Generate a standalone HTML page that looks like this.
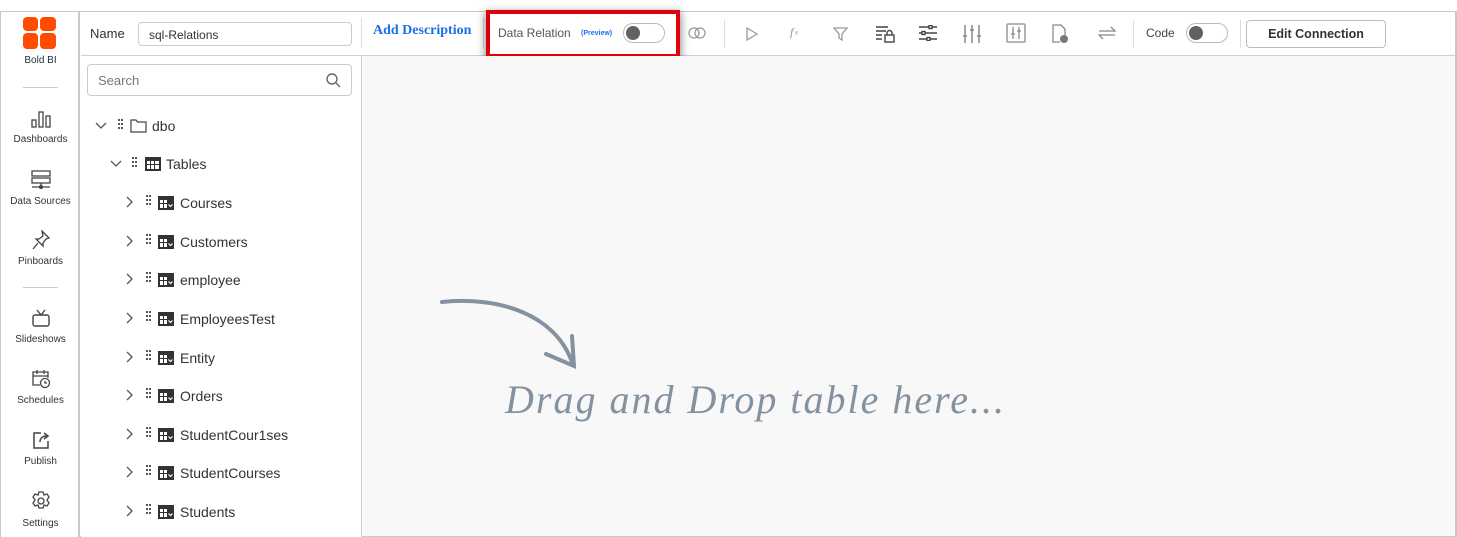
<!DOCTYPE html>
<html><head><meta charset="utf-8"><style>
*{box-sizing:border-box;margin:0;padding:0}
body{width:1457px;height:537px;background:#fff;font-family:"Liberation Sans",sans-serif;position:relative;overflow:hidden;color:#333}
.a{position:absolute}
.frame{left:0;top:11px;width:1457px;height:526px;border:1px solid #c8c8c8;border-right:2px solid #c8c8c8}
.side{left:1px;top:12px;width:79px;height:525px;border-right:2px solid #c8c8c8;background:#fff}
.nav{position:absolute;left:0;width:79px;text-align:center;font-size:10px;color:#333}
.nav svg{display:block;margin:0 auto 6px}
.top{left:81px;top:12px;width:1374px;height:44px;border-bottom:1px solid #d0d0d0;background:#fff}
.tree{left:81px;top:56px;width:281px;height:481px;border-right:1px solid #d0d0d0;background:#fff}
.canvas{left:363px;top:56px;width:1092px;height:480px;background:#f8f8f8}
.row{position:absolute;font-size:14px;color:#333;display:flex;align-items:center;height:20px}
.tg{position:absolute;background:#eee;border:1px solid #bbb;border-radius:10px;width:42px;height:20px}
.tg i{position:absolute;left:2px;top:2px;width:14px;height:14px;border-radius:50%;background:#616161}
.ic{position:absolute;top:24px}
</style></head><body>
<div class="a frame"></div>
<div class="a side">
 <svg class="a" style="left:22px;top:5px" width="33" height="32" viewBox="0 0 33 32"><rect x="0" y="0" width="15" height="14" rx="4" fill="#ff4c00"/><rect x="17" y="0" width="16" height="14" rx="4" fill="#ff4c00"/><rect x="0" y="16" width="15" height="16" rx="4" fill="#ff4c00"/><rect x="17" y="16" width="16" height="16" rx="4" fill="#ff4c00"/></svg>
 <div class="nav" style="top:43px;font-size:10px;color:#1f2d3d">Bold BI</div>
 <div class="a" style="left:22px;top:75px;width:35px;border-top:1px solid #ccc"></div>
 <div class="nav" style="top:98px"><svg width="20" height="18" viewBox="0 0 20 18" fill="none" stroke="#444" stroke-width="1.3"><rect x="1" y="10" width="4" height="7"/><rect x="8" y="2" width="4" height="15"/><rect x="15" y="6" width="4" height="11"/></svg>Dashboards</div>
 <div class="nav" style="top:158px"><svg width="22" height="20" viewBox="0 0 22 20" fill="none" stroke="#444" stroke-width="1.3"><rect x="2" y="1" width="18" height="5"/><rect x="2" y="8" width="18" height="5"/><path d="M11 13v4M2 17h18"/><circle cx="11" cy="17" r="1.5" fill="#444"/></svg>Data Sources</div>
 <div class="nav" style="top:218px"><svg width="20" height="20" viewBox="0 0 20 20" fill="none" stroke="#444" stroke-width="1.3"><path d="M11 1l7 7-3 1-3 4 0 3-7-7 3 0 4-3z M7 13l-5 6"/></svg>Pinboards</div>
 <div class="a" style="left:22px;top:275px;width:35px;border-top:1px solid #ccc"></div>
 <div class="nav" style="top:296px"><svg width="20" height="20" viewBox="0 0 20 20" fill="none" stroke="#444" stroke-width="1.4"><rect x="2" y="7" width="16" height="11" rx="2"/><path d="M6 2l4 5 4-5"/></svg>Slideshows</div>
 <div class="nav" style="top:356px"><svg width="20" height="21" viewBox="0 0 20 21" fill="none" stroke="#444" stroke-width="1.3"><path d="M9 17H2V4h15v6M2 8h15M6 2v4M13 2v4"/><circle cx="14" cy="15" r="4.5"/><path d="M14 13v2h2"/></svg>Schedules</div>
 <div class="nav" style="top:418px"><svg width="20" height="20" viewBox="0 0 20 20" fill="none" stroke="#444" stroke-width="1.5"><path d="M10 3H3v15h14v-7"/><path d="M9 12c0-4 3-6 7-6M13 3l4 3-4 3"/></svg>Publish</div>
 <div class="nav" style="top:478px"><svg width="22" height="22" viewBox="0 0 22 22" fill="none" stroke="#444" stroke-width="1.3"><path d="M9 2h4l1 3 3-1 2 3-2 3 2 3-2 3-3-1-1 3H9l-1-3-3 1-2-3 2-3-2-3 2-3 3 1z"/><circle cx="11" cy="11" r="3"/></svg>Settings</div>
</div>
<div class="a top">
 <div class="a" style="left:9px;top:14px;font-size:13px">Name</div>
 <div class="a" style="left:57px;top:10px;width:214px;height:24px;border:1px solid #ccc;border-radius:4px;font-size:12px;padding:5px 10px">sql-Relations</div>
 <div class="a" style="left:280px;top:6px;height:30px;border-left:1px solid #ddd"></div>
 <div class="a" style="left:292px;top:11px;font-family:'Liberation Serif',serif;font-weight:bold;font-size:14px;color:#1a6fe8">Add Description</div>
 <div class="a" style="left:402px;top:6px;height:30px;border-left:1px solid #ddd"></div>
 <div class="a" style="left:417px;top:14px;font-size:12px;color:#555">Data Relation</div>
 <div class="a" style="left:500px;top:18px;font-size:7px;font-weight:bold;color:#1a6fe8">(Preview)</div>
 <div class="tg" style="left:542px;top:11px;background:#fff"><i></i></div>
 <svg class="ic" style="left:607px;top:15px" width="18" height="12" viewBox="0 0 18 12" fill="none" stroke="#999" stroke-width="1.3"><circle cx="6" cy="6" r="5"/><circle cx="12" cy="6" r="5"/></svg>
 <div class="a" style="left:643px;top:8px;height:28px;border-left:1px solid #ddd"></div>
 <svg class="ic" style="left:665px;top:15px" width="12" height="14" viewBox="0 0 12 14" fill="none" stroke="#999" stroke-width="1.3"><path d="M1 1l10 6-10 6z"/></svg>
 <div class="a" style="left:709px;top:13px;font-size:12px;color:#999;font-family:'Liberation Serif',serif;font-style:italic">f<span style="font-size:9px">×</span></div>
 <svg class="ic" style="left:752px;top:15px" width="15" height="14" viewBox="0 0 15 14" fill="none" stroke="#999" stroke-width="1.3"><path d="M1 1h13L9 7v6L6 11V7z"/></svg>
 <svg class="ic" style="left:794px;top:13px" width="20" height="18" viewBox="0 0 20 18" fill="none" stroke="#444" stroke-width="1.4"><path d="M1 2h12M1 6h10M1 10h6M1 14h6"/><rect x="10" y="10" width="9" height="7"/><path d="M12 10V8a2.5 2.5 0 015 0v2"/></svg>
 <svg class="ic" style="left:837px;top:13px" width="20" height="16" viewBox="0 0 20 16" fill="none" stroke="#444" stroke-width="1.4"><path d="M1 2h18M1 8h18M1 14h18"/><rect x="11" y="0.5" width="3" height="3" fill="#fff"/><rect x="4" y="6.5" width="3" height="3" fill="#fff"/><rect x="9" y="12.5" width="3" height="3" fill="#fff"/></svg>
 <svg class="ic" style="left:881px;top:12px" width="20" height="20" viewBox="0 0 20 20" fill="none" stroke="#777" stroke-width="1.3"><path d="M3 1v18M10 1v18M17 1v18M1 12h4M8 6h4M15 12h4"/></svg>
 <svg class="ic" style="left:925px;top:11px" width="20" height="20" viewBox="0 0 20 20" fill="none" stroke="#888" stroke-width="1.3"><rect x="1" y="1" width="18" height="18" rx="1"/><path d="M7 4v12M13 4v12M5 11h4M11 8h4"/></svg>
 <svg class="ic" style="left:970px;top:12px" width="18" height="20" viewBox="0 0 18 20" fill="none" stroke="#888" stroke-width="1.3"><path d="M9 18H2V1h8l4 4v6"/><circle cx="13" cy="15" r="4" fill="#777" stroke="none"/></svg>
 <svg class="ic" style="left:1017px;top:14px" width="18" height="14" viewBox="0 0 18 14" fill="none" stroke="#888" stroke-width="1.3"><path d="M1 5h16L13 1M17 9H1l4 4"/></svg>
 <div class="a" style="left:1052px;top:8px;height:28px;border-left:1px solid #ddd"></div>
 <div class="a" style="left:1065px;top:14px;font-size:12px;color:#444">Code</div>
 <div class="tg" style="left:1105px;top:11px;background:#fff"><i style="left:2px"></i></div>
 <div class="a" style="left:1159px;top:8px;height:28px;border-left:1px solid #ddd"></div>
 <div class="a" style="left:1165px;top:8px;width:140px;height:28px;border:1px solid #bbb;border-radius:4px;font-size:12.5px;font-weight:bold;color:#333;text-align:center;line-height:26px">Edit Connection</div>
</div>
<div class="a" style="left:486px;top:10px;width:194px;height:48px;border:4px solid #e0000b;box-shadow:0 3px 8px 1px rgba(0,0,0,.45)"></div>
<div class="a tree">
 <div class="a" style="left:6px;top:8px;width:265px;height:32px;border:1px solid #ccc;border-radius:4px;font-size:13px;color:#777;padding:8px 10px">Search</div>
 <svg class="a" style="left:245px;top:17px" width="15" height="15" viewBox="0 0 15 15" fill="none" stroke="#666" stroke-width="1.4"><circle cx="6" cy="6" r="5"/><path d="M10 10l4 4"/></svg>
</div>
<svg class="a" style="left:0;top:0" width="362" height="537">
 <defs>
  <g id="dots" fill="#555"><rect x="0" y="0" width="2" height="2"/><rect x="3" y="0" width="2" height="2"/><rect x="0" y="4" width="2" height="2"/><rect x="3" y="4" width="2" height="2"/><rect x="0" y="8" width="2" height="2"/><rect x="3" y="8" width="2" height="2"/></g>
  <g id="tb"><rect x="0" y="0" width="16" height="14" fill="#333"/><rect x="2" y="4" width="3" height="3" fill="#fff"/><rect x="6" y="4" width="3" height="3" fill="#fff"/><rect x="2" y="8" width="3" height="4" fill="#fff"/><rect x="6" y="8" width="3" height="4" fill="#fff"/><path d="M10.5 8.5l2 2 2-2" stroke="#fff" stroke-width="1.2" fill="none"/></g>
 </defs>
 <path d="M96 123l5 5 5-5" stroke="#555" stroke-width="1.3" fill="none"/>
 <use href="#dots" x="118" y="119"/>
 <path d="M131 120h5l1.5 2H146v10h-15z" fill="none" stroke="#444" stroke-width="1.2"/>
 <path d="M111 161l5 5 5-5" stroke="#555" stroke-width="1.3" fill="none"/>
 <use href="#dots" x="132" y="157"/>
 <g><rect x="145" y="157" width="16" height="14" fill="#333"/><rect x="147" y="161" width="3" height="3" fill="#fff"/><rect x="151" y="161" width="3" height="3" fill="#fff"/><rect x="155" y="161" width="4" height="3" fill="#fff"/><rect x="147" y="165" width="3" height="4" fill="#fff"/><rect x="151" y="165" width="3" height="4" fill="#fff"/><rect x="155" y="165" width="4" height="4" fill="#fff"/></g>
 <g stroke="#555" stroke-width="1.3" fill="none">
  <path d="M127 197l5 5-5 5"/><path d="M127 236l5 5-5 5"/><path d="M127 274l5 5-5 5"/><path d="M127 313l5 5-5 5"/><path d="M127 352l5 5-5 5"/><path d="M127 390l5 5-5 5"/><path d="M127 429l5 5-5 5"/><path d="M127 467l5 5-5 5"/><path d="M127 506l5 5-5 5"/>
 </g>
 <use href="#dots" x="146" y="195"/><use href="#tb" x="158" y="196"/>
 <use href="#dots" x="146" y="234"/><use href="#tb" x="158" y="235"/>
 <use href="#dots" x="146" y="272"/><use href="#tb" x="158" y="273"/>
 <use href="#dots" x="146" y="311"/><use href="#tb" x="158" y="312"/>
 <use href="#dots" x="146" y="350"/><use href="#tb" x="158" y="351"/>
 <use href="#dots" x="146" y="388"/><use href="#tb" x="158" y="389"/>
 <use href="#dots" x="146" y="427"/><use href="#tb" x="158" y="428"/>
 <use href="#dots" x="146" y="465"/><use href="#tb" x="158" y="466"/>
 <use href="#dots" x="146" y="504"/><use href="#tb" x="158" y="505"/>
</svg>
<div class="row" style="left:152px;top:116px">dbo</div>
<div class="row" style="left:166px;top:154px">Tables</div>
<div class="row" style="left:180px;top:193px">Courses</div>
<div class="row" style="left:180px;top:232px">Customers</div>
<div class="row" style="left:180px;top:270px">employee</div>
<div class="row" style="left:180px;top:309px">EmployeesTest</div>
<div class="row" style="left:180px;top:348px">Entity</div>
<div class="row" style="left:180px;top:386px">Orders</div>
<div class="row" style="left:180px;top:425px">StudentCour1ses</div>
<div class="row" style="left:180px;top:463px">StudentCourses</div>
<div class="row" style="left:180px;top:502px">Students</div>
<div class="a canvas"></div>
<svg class="a" style="left:430px;top:290px" width="160" height="90" viewBox="0 0 160 90" fill="none" stroke="#8491a0" stroke-width="4" stroke-linecap="round"><path d="M12 12C70 6 125 25 142 72"/><path d="M142 46l2 30-28-12"/></svg>
<div class="a" style="left:505px;top:376px;font-family:'Liberation Serif',serif;font-style:italic;font-size:40px;color:#8491a0;letter-spacing:2px;white-space:nowrap">Drag and Drop table here...</div>
</body></html>
